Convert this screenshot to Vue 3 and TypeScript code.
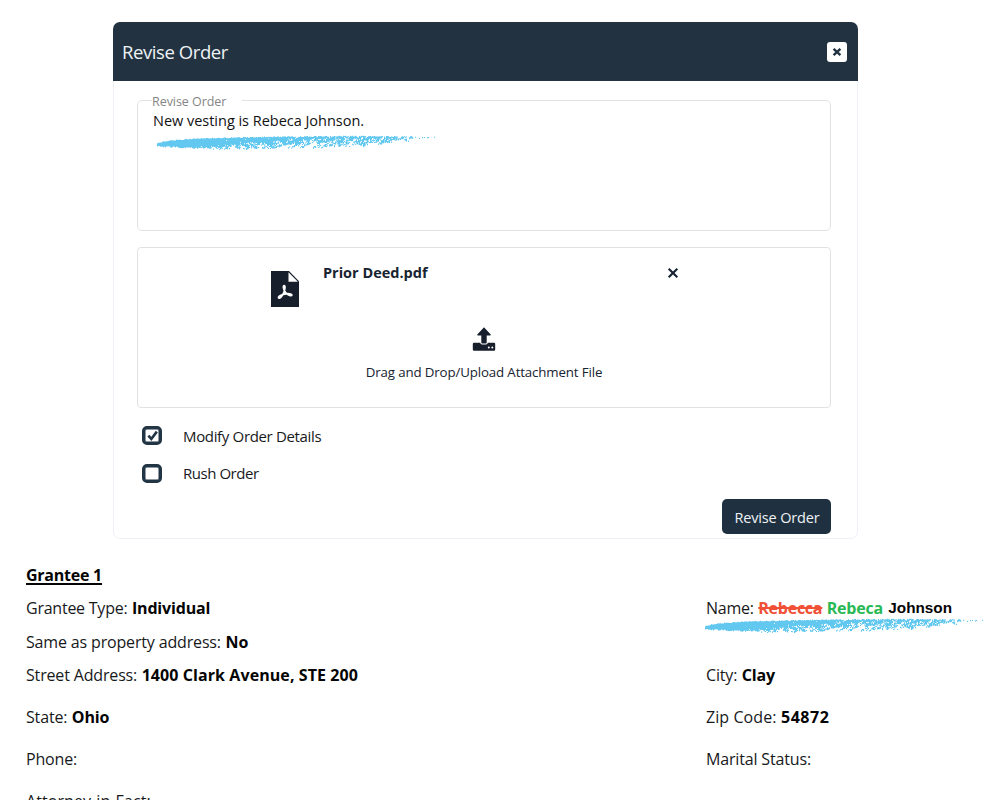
<script setup lang="ts">
import { ref } from 'vue'

interface Part { text: string; kind: string; spacing: string }
interface Row { height: string; left: Part[]; right: Part[]; brush?: boolean }

const modify = ref(true)
const rush = ref(false)

const label = (text: string, spacing = 'snug'): Part => ({ text, kind: 'label', spacing })
const value = (text: string, spacing = 'snug', kind = 'value'): Part => ({ text, kind, spacing })

const rows: Row[] = [
  { height: 'h33', left: [value('Grantee 1', 'tight', 'value heading')], right: [] },
  { height: 'h33', left: [label('Grantee Type:', 'tight'), value('Individual')], right: [label('Name:', 'tight'), value('Rebecca', 'tight', 'value removed'), value('Rebeca', 'tight', 'value added'), value('Johnson', 'even', 'value plain')], brush: true },
  { height: 'h33', left: [label('Same as property address:'), value('No', 'even')], right: [] },
  { height: 'h37', left: [label('Street Address:'), value('1400 Clark Avenue, STE 200', 'open')], right: [label('City:'), value('Clay')] },
  { height: 'h42', left: [label('State:'), value('Ohio')], right: [label('Zip Code:', 'open'), value('54872', 'wide')] },
  { height: 'h42', left: [label('Phone:')], right: [label('Marital Status:')] },
  { height: 'h42', left: [label('Attorney-in-Fact:', 'open')], right: [] },
]

function lerpTable(points: [number, number][], x: number): number {
  for (let i = 1; i < points.length; i++) {
    const [x0, y0] = points[i - 1]
    const [x1, y1] = points[i]
    if (x <= x1) return y0 + ((y1 - y0) * (x - x0)) / (x1 - x0)
  }
  return points[points.length - 1][1]
}

// Dry brush stroke: clumped flecks that thin out toward the right end.
function brushPath(): string {
  let seed = 90210
  const rand = () => {
    seed = (seed * 1664525 + 1013904223) >>> 0
    return seed / 4294967296
  }
  const clumps = Array.from({ length: 1200 }, rand)
  const topLine: [number, number][] = [[3, 9], [8, 7.2], [20, 5.6], [50, 3.8], [120, 2.4], [200, 1.6], [300, 2.5]]
  const bottomLine: [number, number][] = [[3, 10.6], [8, 11.8], [20, 12.2], [45, 13.4], [70, 14.5], [130, 14], [170, 12.8], [210, 11.5], [250, 8.5], [300, 6]]
  const density: [number, number][] = [[3, 1.6], [30, 1.3], [55, 1.08], [90, 0.92], [150, 0.84], [220, 0.74], [245, 0.58], [265, 0.4], [280, 0.22], [300, 0.14]]
  let d = ''
  for (let x = 3; x < 299; x += 1) {
    const top = lerpTable(topLine, x) + rand() * 1
    const bottom = lerpTable(bottomLine, x) + rand() * 1
    const base = lerpTable(density, x)
    for (let y = top; y < bottom; y += 1) {
      const v = (y - top) / (bottom - top)
      const clump = clumps[(Math.floor((x + y) / 3) * 8 + Math.floor(y / 2)) % 1200]
      const p = base - v * (0.3 + v * 0.3)
      if (rand() * 0.45 + clump * 0.55 < p) {
        d += `M${x.toFixed(1)} ${y.toFixed(1)}h1.1v1.1h-1.1z`
      }
    }
  }
  return d
}
const stroke = brushPath()
</script>

<template>
  <main class="page">
    <section class="modal">
      <header class="modal-head">
        <h1>Revise Order</h1>
        <button class="close" aria-label="Close">
          <svg viewBox="0 0 20 20"><path d="M6.600 6.800l6.800 6.400M13.400 6.800l-6.800 6.400" /></svg>
        </button>
      </header>
      <div class="modal-body">
        <div class="note">
          <span class="legend">Revise Order</span>
          <p>New vesting is Rebeca Johnson.</p>
          <svg class="brush" viewBox="0 0 300 18"><path :d="stroke" /></svg>
        </div>
        <div class="drop">
          <div class="file">
            <svg class="pdf" viewBox="0 0 28 36">
              <path class="ink" d="M0 0H18L28 10.300V36H0z" />
              <path class="fold" d="M17.500 1.200V10.800H26.900z" />
              <path class="swirl" d="M13.300 14.600c-1.700 0-.8 3.800.9 6.300 1.400 2 4.600 4.400 6.300 3.600 1.500-1.300-2-2.100-5.300-1.700-3.500.4-8 2.100-7.700 3.900.8 1.900 4.100-1.800 5.400-5.300.9-2.600 1.700-6.700.4-6.800z" />
            </svg>
            <strong class="filename">Prior Deed.pdf</strong>
            <svg class="remove" viewBox="0 0 12 12"><path d="M1.700 1.700l8.600 8.600M10.300 1.700l-8.600 8.600" /></svg>
          </div>
          <svg class="upload" viewBox="0 0 24 24">
            <path d="M12 0.300L18.700 7.500Q19 8.600 18 8.600H14.700V15.500Q14.700 16.400 13.800 16.400H10.200Q9.300 16.400 9.300 15.500V8.600H6Q5 8.600 5.300 7.500z" />
            <path d="M2 15.800H8.200Q8.500 17.500 10 17.500H14Q15.500 17.500 15.800 15.800H22Q23.200 15.800 23.200 17V22.600Q23.200 23.800 22 23.800H2Q.8 23.800 .8 22.600V17Q.8 15.800 2 15.800z" />
            <circle cx="16.800" cy="20.600" r="1" /><circle cx="20.300" cy="20.600" r="1" />
          </svg>
          <span class="hint">Drag and Drop/Upload Attachment File</span>
        </div>
        <div class="option" @click="modify = !modify">
          <span class="box"><svg v-if="modify" viewBox="0 0 12 12"><path d="M2.200 6.200l2.700 3L10 2.400" /></svg></span>
          <span>Modify Order Details</span>
        </div>
        <div class="option" @click="rush = !rush">
          <span class="box"><svg v-if="rush" viewBox="0 0 12 12"><path d="M2.200 6.200l2.700 3L10 2.400" /></svg></span>
          <span class="rush">Rush Order</span>
        </div>
        <footer><button class="submit">Revise Order</button></footer>
      </div>
    </section>
    <section class="details">
      <div v-for="(row, i) in rows" :key="i" class="row" :class="row.height">
        <div class="cell left"><span v-for="p in row.left" :key="p.text" :class="[p.kind, p.spacing]">{{ p.text }}</span></div>
        <div class="cell"><span v-for="p in row.right" :key="p.text" :class="[p.kind, p.spacing]">{{ p.text }}</span>
          <svg v-if="row.brush" class="brush" viewBox="0 0 300 18"><path :d="stroke" /></svg>
        </div>
      </div>
    </section>
  </main>
</template>

<style>
body { margin: 0; background: #fff; }
</style>

<style scoped>
* { box-sizing: border-box; }
.page { width: 1000px; height: 800px; padding-top: 22px; overflow: hidden; background: #fff; color: #17191b; font-family: "Open Sans", "Noto Sans", sans-serif; }
h1, p { margin: 0; font-weight: 400; }
button { padding: 0; border: 0; font: inherit; }
.modal { width: 745px; height: 517px; margin-left: 113px; border-radius: 7px; overflow: hidden; }
.modal-head { display: flex; align-items: center; justify-content: space-between; height: 59px; padding: 0 11px 0 9px; background: #223241; color: #eef2f5; }
h1 { font-size: 18.500px; line-height: 28px; letter-spacing: -.42px; }
.close { width: 20px; height: 20px; border-radius: 3px; background: #fff; }
.close svg { display: block; width: 20px; height: 20px; fill: none; stroke: #223241; stroke-width: 2.400; }
.modal-body { height: 458px; padding: 19px 26px 0 23px; border: 1px solid #edf1f6; border-top: 0; border-radius: 0 0 7px 7px; }
.note { position: relative; height: 131px; padding: 10px 0 0 15px; border: 1px solid #e1e2e3; border-radius: 5px; }
.legend { position: absolute; left: 14px; top: -8px; width: 90px; height: 18px; background: #fff; color: #858585; font-size: 12.500px; line-height: 18px; letter-spacing: -.05px; }
.note p { color: #111; font-size: 14.500px; line-height: 20px; letter-spacing: -.02px; }
.brush { position: absolute; width: 300px; height: 18px; fill: #62c8ef; }
.note .brush { left: 16px; top: 33px; }
.drop { display: flex; flex-direction: column; align-items: center; height: 161px; margin-top: 16px; border: 1px solid #e1e2e3; border-radius: 4px; color: #172330; }
.file { display: flex; align-self: stretch; height: 79px; padding: 22.500px 0 0 133px; }
.pdf { width: 28px; height: 36px; }
.ink { fill: #171f2d; }
.fold { fill: #fff; }
.swirl { fill: none; stroke: #fff; stroke-width: 1.700; }
.filename { width: 344px; margin: -9.500px 0 0 24px; font-size: 14.500px; line-height: 24px; }
.remove { width: 12px; height: 12px; margin-top: -3.500px; fill: none; stroke: #172330; stroke-width: 2.100; }
.upload { width: 24px; height: 24px; fill: #171f2d; }
.upload circle { fill: #fff; }
.hint { margin-top: 11px; font-size: 13.300px; line-height: 20px; letter-spacing: -.14px; white-space: nowrap; }
.option { display: flex; align-items: center; height: 37.500px; padding-left: 5px; color: #17191b; font-size: 15px; letter-spacing: -.34px; }
.drop + .option { margin-top: 9px; }
.rush { letter-spacing: -.46px; }
.box { display: grid; place-items: center; width: 20px; height: 19px; margin-right: 21px; border: 3px solid #223544; border-radius: 5px; box-shadow: inset 0 0 0 .5px #223544; }
.box svg { width: 13px; height: 13px; fill: none; stroke: #223544; stroke-width: 2.400; }
footer { display: flex; justify-content: flex-end; margin-top: 7px; }
.submit { width: 109px; height: 35px; padding-left: 1px; border-radius: 5px; background: #1f3040; color: #eef2f5; font-size: 14.500px; line-height: 37px; letter-spacing: -.15px; }
.details { display: flex; flex-direction: column; margin-top: 19px; padding-left: 26px; font-size: 16px; line-height: 22px; }
.row { display: flex; }
.cell { position: relative; display: flex; gap: 4.500px; align-self: flex-start; align-items: center; height: 33px; white-space: nowrap; }
.left { width: 680px; }
.h33 { height: 33.500px; }
.h37 { height: 37.500px; }
.h42 { height: 42px; }
.h42 .cell { height: 42px; }
.value { color: #050505; font-weight: 700; }
.heading { text-decoration: underline; text-decoration-thickness: 1.500px; text-underline-offset: 2px; }
.removed { color: #f05035; text-decoration: line-through; text-decoration-thickness: 1.500px; }
.added { color: #28b955; }
.plain { margin-left: 1px; font-family: "Liberation Sans", Arial, sans-serif; font-size: 15.300px; }
.tight { letter-spacing: -.24px; }
.snug { letter-spacing: -.16px; }
.even { letter-spacing: 0; }
.open { letter-spacing: .08px; }
.wide { letter-spacing: .5px; }
.row .brush { left: -4px; top: 25.500px; }
</style>
